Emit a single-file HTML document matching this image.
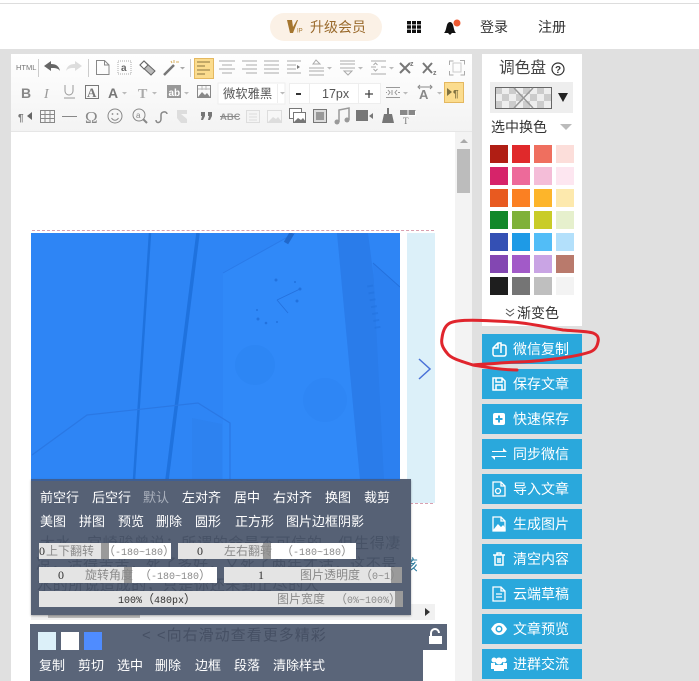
<!DOCTYPE html>
<html><head><meta charset="utf-8"><style>
html,body{margin:0;padding:0}
body{width:699px;height:681px;overflow:hidden;position:relative;background:#e0e0e0;font-family:"Liberation Sans","Noto Sans CJK SC",sans-serif}
.a{position:absolute}
.t{position:absolute;white-space:nowrap;line-height:18px}
.w{color:#fff;font-size:13px}
.b{position:absolute;left:482px;width:100px;height:30px;background:#2aa8dc}
.b span{position:absolute;left:31px;top:6px;color:#fff;font-size:14px;line-height:18px;white-space:nowrap}
.b svg{position:absolute;left:8px;top:5px}
.f{position:absolute;height:16px;font:12px/16px "Liberation Serif","Noto Sans CJK SC",serif;color:#333;white-space:nowrap;overflow:hidden}
.f i{position:absolute;top:0;height:16px;font-style:normal}
.f span{font:10px/16px "Liberation Mono",monospace}
.g{color:#8a8a8a}
</style></head><body>
<div class="a" style="left:0;top:0;width:699px;height:49px;background:#fff"></div>
<div class="a" style="left:0;top:3px;width:699px;height:1px;background:#ddd"></div>
<div class="a" style="left:270px;top:13px;width:112px;height:28px;border-radius:14px;background:#fbf1e6"></div>
<svg class="a" style="left:287px;top:19px" width="17" height="15" viewBox="0 0 17 15"><path d="M0 1h5l1 7 4-7h1L6 14H3z" fill="#a5762f"/><text x="10" y="13.500" font-size="6" fill="#a5762f" font-family="Liberation Sans">IP</text></svg>
<div class="t" style="left:310px;top:18px;font-size:14px;color:#9a6a2c">升级会员</div>
<svg class="a" style="left:407px;top:21px" width="14" height="12" fill="#111"><rect width="4" height="3.400"/><rect x="5" width="4" height="3.400"/><rect x="10" width="4" height="3.400"/><rect y="4.300" width="4" height="3.400"/><rect x="5" y="4.300" width="4" height="3.400"/><rect x="10" y="4.300" width="4" height="3.400"/><rect y="8.600" width="4" height="3.400"/><rect x="5" y="8.600" width="4" height="3.400"/><rect x="10" y="8.600" width="4" height="3.400"/></svg>
<svg class="a" style="left:443px;top:18px" width="20" height="17"><path d="M1 15c2-2 2-5 3-8 .5-2 2-3 3-3s2.500 1 3 3c1 3 1 6 3 8z" fill="#111"/><path d="M5 15h4l-2 2z" fill="#111"/><circle cx="14" cy="5" r="3.500" fill="#ef5a32"/></svg>
<div class="t" style="left:480px;top:18px;font-size:14px;color:#333">登录</div>
<div class="t" style="left:538px;top:18px;font-size:14px;color:#333">注册</div>

<div class="a" style="left:11px;top:54px;width:461px;height:627px;background:#fff"></div>
<div class="a" style="left:11px;top:54px;width:461px;height:78px;background:linear-gradient(#fff,#f3f3f3)"></div>
<div class="a" style="left:11px;top:131px;width:461px;height:1px;background:#e6e6e6"></div>
<div class="a" style="left:455px;top:132px;width:17px;height:549px;background:#f3f3f3"></div>
<div class="a" style="left:457px;top:149px;width:13px;height:44px;background:#bcbcbc"></div>
<svg class="a" style="left:458px;top:138px" width="12" height="6"><path d="M2 5l4-4 4 4z" fill="#aaa"/></svg>

<svg class="a" style="left:0;top:0" width="480" height="132" font-family="Liberation Sans">
<g fill="none" stroke="#999" stroke-width="1">
<text x="16" y="70" font-size="7.500" fill="#777" stroke="none">HTML</text>
<path d="M38.500 59v18M88.500 59v18M190.500 59v18" stroke="#ccc"/>
<path d="M44 66l7-5v3c5 0 8 2 9 7-2-3-5-3-9-3v3z" fill="#666" stroke="none"/>
<path d="M82 66l-7-5v3c-5 0-8 2-9 7 2-3 5-3 9-3v3z" fill="#ddd" stroke="none"/>
<path d="M96.500 60.500h8l4.500 4.500v9.500H96.500zM104.500 60.500v4.500h4.500" stroke="#888"/>
<rect x="118" y="61" width="13" height="13" stroke="#aaa" stroke-dasharray="1 1"/><text x="121" y="71" font-size="10" fill="#666" stroke="none" font-weight="bold">a</text>
<path d="M140 65l4-4 11 10-4 4z" fill="#bbb" stroke="#666"/><path d="M140 65l4-4 4 4-4 4z" fill="#fff" stroke="#666"/>
<path d="M164 75l10-10" stroke="#777" stroke-width="2.500"/><path d="M174 60v3M176 62h3M171 61l1 2" stroke="#d8b060"/>
<path d="M180 67l2.500 2.500 2.500-2.500" fill="#aaa" stroke="none"/>
<rect x="194.500" y="58.500" width="19" height="20" fill="#fbdc8e" stroke="#e4b860"/>
<path d="M197 62h13M197 66h8M197 70h13M197 74h8" stroke="#8a7440"/>
<path d="M219 61h16M222 65h10M219 69h16M222 73h10M242 61h15M246 65h11M242 69h15M246 73h11M264 61h15M264 65h15M264 69h15M264 73h15M287 61h14M287 65h9M287 69h9M287 73h14" stroke="#aaa"/>
<path d="M297 65l3 2-3 2z" fill="#777" stroke="none"/>
<path d="M309 68h15M309 71h15M309 75h15M316 60l-3 4h7z" stroke="#aaa"/>
<path d="M340 61h15M340 64h15M340 68h15M344 71h8l-4 4z" stroke="#aaa"/>
<path d="M371 61h15M371 74h15M371 67h5M381 67h5M373.500 65l2-2 2 2M373.500 69l2 2 2-2" stroke="#aaa"/>
<path d="M327 67l2.500 2.500 2.500-2.500M358 67l2.500 2.500 2.500-2.500M389 67l2.500 2.500 2.500-2.500" fill="#bbb" stroke="none"/>
<path d="M400 63l10 10M410 63l-10 10M423 63l9 10M432 63l-9 10" stroke="#777" stroke-width="2"/>
<text x="410" y="66" font-size="7" font-weight="bold" fill="#777" stroke="none">z</text><text x="433" y="75" font-size="7" font-weight="bold" fill="#777" stroke="none">z</text>
<path d="M449.500 65v-4h4M460 60.500h4.500v4M464.500 71v4h-4M453.500 75h-4v-4" stroke="#aaa"/><rect x="453" y="63" width="8" height="9" stroke="#ccc"/>
</g>
<text x="21" y="98" font-size="14" font-weight="bold" fill="#888">B</text>
<text x="44" y="98" font-size="14" font-style="italic" fill="#999" font-family="Liberation Serif">I</text>
<path d="M65 85v6a4 4 0 0 0 8 0v-6M64 98h11" fill="none" stroke="#999"/>
<rect x="85.500" y="85.500" width="13" height="13" fill="none" stroke="#777"/><text x="87" y="97" font-size="13" font-weight="bold" fill="#777" font-family="Liberation Serif">A</text>
<text x="108" y="98" font-size="14" font-weight="bold" fill="#777">A</text><path d="M122 92l2.500 2.500 2.500-2.500M152 92l2.500 2.500 2.500-2.500M184 92l2.500 2.500 2.500-2.500" fill="#bbb"/>
<text x="138" y="98" font-size="14" font-weight="bold" fill="#aaa" font-family="Liberation Serif">T</text>
<rect x="167" y="85" width="14" height="13" fill="#999"/><text x="168.500" y="96" font-size="10" font-weight="bold" fill="#fff">ab</text>
<rect x="197.500" y="85.500" width="13" height="12" fill="none" stroke="#888"/><path d="M198 97l4-5 3 3 2-2 3 4z" fill="#888"/><path d="M198 89h12M202 86v4M206 86v4" stroke="#bbb"/>
<rect x="218" y="83" width="67" height="21" fill="#fff" stroke="#eee"/>
<text x="223" y="98" font-size="12.300" fill="#555" font-family="Noto Sans CJK SC">微软雅黑</text><path d="M280 92l2.500 2.500 2.500-2.500" fill="#bbb"/><path d="M277.500 84v19" stroke="#eee"/>
<rect x="289.500" y="83.500" width="91" height="20" fill="#fff" stroke="#eee"/><path d="M309.500 84v19M358.500 84v19" stroke="#eee"/>
<path d="M296 94h5" stroke="#333" stroke-width="2"/>
<text x="322" y="98" font-size="12.500" fill="#555">17px</text>
<path d="M365 94h8M369 90v8" stroke="#444" stroke-width="1.300"/>
<g fill="none" stroke="#999"><path d="M386 87.500h14M386 97.500h14M386 92.500h1M398 92.500h2M392 90v5"/><path d="M388 90l2 2.500-2 2.500M397 90l-2 2.500 2 2.500"/><path d="M419 87h12M420 85l-2 2 2 2M430 85l2 2-2 2" stroke="#888"/></g>
<path d="M403 92l2.500 2.500 2.500-2.500M437 92l2.500 2.500 2.500-2.500" fill="#bbb"/>
<text x="419" y="99" font-size="13" font-weight="bold" fill="#888">A</text>
<rect x="444.500" y="82.500" width="19" height="20" fill="#fbdc8e" stroke="#e4b860"/><path d="M447 88l5 4-5 4z" fill="#7f7140"/><text x="453" y="97" font-size="10" fill="#7f7140" font-weight="bold">¶</text>
<text x="18" y="121" font-size="10" fill="#777" font-weight="bold">¶</text><path d="M27 116l5-4v8z" fill="#666"/>
<g fill="none" stroke="#888"><rect x="40.500" y="110.500" width="14" height="12"/><path d="M40 114.500h15M40 118.500h15M45 111v12M50 111v12"/><path d="M62 116.500h15"/></g>
<text x="85" y="123" font-size="17" fill="#888" font-family="Liberation Serif">Ω</text>
<g fill="none" stroke="#888"><circle cx="115" cy="116" r="7"/><path d="M111.500 118c2 3 5 3 7 0"/><circle cx="139" cy="115" r="6"/><path d="M143 119l4 4" stroke-width="2"/><path d="M156 120c0 4 5 3 5-1v-4c0-4 6-4 6-1" stroke-width="1.500"/></g>
<circle cx="112.500" cy="114" r=".9" fill="#888"/><circle cx="117.500" cy="114" r=".9" fill="#888"/>
<text x="136" y="118" font-size="8" fill="#888">a</text>
<path d="M177 110h10v4h-6l6 5v4h-6l-4-5z" fill="#ddd"/>
<path d="M201 112h4v4l-2 4h-2l1-4h-1zM208 112h4v4l-2 4h-2l1-4h-1z" fill="#777"/>
<text x="220" y="120" font-size="9.500" font-weight="bold" fill="#999">ABC</text><path d="M220 116.500h19" stroke="#888"/>
<rect x="246.500" y="110.500" width="13" height="12" fill="#f4f4f4" stroke="#ddd"/><path d="M249 114h8M249 117h8M249 120h8" stroke="#ddd"/>
<rect x="267.500" y="110.500" width="14" height="12" fill="#f7f7f7" stroke="#ddd"/><path d="M268 122l5-5 3 2 2-2 4 5z" fill="#ddd"/>
<rect x="289.500" y="108.500" width="12" height="10" fill="#fff" stroke="#777"/><rect x="293.500" y="112.500" width="12" height="10" fill="#fff" stroke="#777"/><path d="M294 122l4-4 3 2 2-2 3 4z" fill="#777"/>
<rect x="313.500" y="109.500" width="13" height="13" fill="#ddd" stroke="#777"/><rect x="316" y="112" width="8" height="8" fill="#999"/>
<path d="M339 122v-12l10-2v12" fill="none" stroke="#999" stroke-width="1.500"/><circle cx="337" cy="122" r="2.500" fill="#999"/><circle cx="347" cy="120" r="2.500" fill="#999"/>
<rect x="356" y="110" width="12" height="11" fill="#777"/><path d="M369 116l4-3v6z" fill="#777"/>
<path d="M387 108h2v6h3l2 9h-12l2-9h3z" fill="#777"/>
<path d="M400 110h16v5h-16z" fill="#888"/><path d="M400.500 115.500h15v-5M408 110v5" stroke="#fff" fill="none"/><text x="403" y="124" font-size="9" fill="#777" font-family="Liberation Serif">T</text>
</svg>

<div class="a" style="left:32px;top:230px;width:402px;border-top:1px dashed #d9a0b0"></div>
<svg class="a" style="left:31px;top:233px" width="369" height="247" viewBox="31 233 369 247">
<rect x="31" y="233" width="369" height="247" fill="#2e85f5"/>
<path d="M223 273L295 233H337L360 480H223z" fill="#3089f8"/>
<path d="M337 233h31l32 247h-40z" fill="#2a7cea"/>
<path d="M373 263l27 24v193h-16z" fill="#2c80f0"/>
<path d="M192 418l30 6v56h-30z" fill="#2d82f0"/>
<g fill="none">
<path d="M150 233L134 480" stroke-width="2.500" stroke="#1f72de"/><path d="M198 233L167 480" stroke-width="3.500" stroke="#1f72de"/>
<path d="M223 273L295 233" stroke-width="1" stroke="#2a7ae8"/><path d="M32 455L87 415L198 403L230 423V480" stroke-width="1.200" stroke="#2a78e4"/>
<path d="M373 263L400 287" stroke-width="1" stroke="#2470dc"/><path d="M277 300L300 289M277 300L288 313" stroke-width=".8" stroke="#2470dc"/>
<path d="M292 233l-6 10" stroke-width="5" stroke="#2068cc"/>
</g>
<g fill="#2272de"><circle cx="276" cy="280" r="1.500"/><circle cx="295" cy="282" r="1"/><circle cx="300" cy="289" r="1.500"/><circle cx="297" cy="301" r="1.500"/><circle cx="257" cy="310" r="1"/><circle cx="258" cy="319" r="1.500"/><circle cx="266" cy="323" r="1.300"/><circle cx="277" cy="322" r="1"/></g>
<circle cx="255" cy="365" r="20" fill="#2c83f2" opacity=".6"/><circle cx="325" cy="400" r="22" fill="#2c83f2" opacity=".5"/>
<path d="M370 285l8 45" stroke="#2272de" stroke-width="6" stroke-dasharray="2 5" opacity=".5"/>
</svg>
<div class="a" style="left:407px;top:233px;width:28px;height:270px;background:#dcf0f9"></div>
<svg class="a" style="left:417px;top:357px" width="16" height="24"><path d="M2 2l11 10L2 22" fill="none" stroke="#4a72d8" stroke-width="1.500"/></svg>
<div class="a" style="left:31px;top:503px;width:402px;border-top:1px dashed #d9a0b0"></div>

<div class="a" style="left:31px;top:604px;width:404px;height:16px;background:#f1f1f1"></div>
<div class="a" style="left:48px;top:612px;width:92px;height:6px;background:#bcbcbc"></div>
<svg class="a" style="left:424px;top:607px" width="8" height="10"><path d="M1 1l5 4-5 4z" fill="#333"/></svg>
<div class="t" style="left:403px;top:557px;font-size:15px;color:#2d7da0">该</div>

<div class="a" style="left:31px;top:479px;width:380px;height:136px;background:#566175;box-shadow:0 1px 2px rgba(0,0,0,.3)"></div>
<div class="a" style="left:31px;top:479px;width:369px;height:2px;background:#3d5f96"></div>
<div class="t" style="left:40px;top:535px;font-size:15px;color:#475266;letter-spacing:.7px">大水，宫崎骏曾说：所谓的命是不可信的，但生得凄</div>
<div class="t" style="left:36px;top:556px;font-size:15px;color:#475266;letter-spacing:.7px">凉，活得苦苦，死了多好，又死了两年才活，这不是</div>
<div class="t" style="left:37px;top:577px;font-size:15px;color:#475266;letter-spacing:.7px">水的所说造成的，只是你还未到止尽的人</div>
<div class="t w" style="left:40px;top:489px">前空行</div>
<div class="t w" style="left:92px;top:489px">后空行</div>
<div class="t w" style="left:143px;top:489px;color:#a9b0bc">默认</div>
<div class="t w" style="left:182px;top:489px">左对齐</div>
<div class="t w" style="left:234px;top:489px">居中</div>
<div class="t w" style="left:273px;top:489px">右对齐</div>
<div class="t w" style="left:325px;top:489px">换图</div>
<div class="t w" style="left:364px;top:489px">裁剪</div>
<div class="t w" style="left:40px;top:513px">美图</div>
<div class="t w" style="left:79px;top:513px">拼图</div>
<div class="t w" style="left:118px;top:513px">预览</div>
<div class="t w" style="left:156px;top:513px">删除</div>
<div class="t w" style="left:195px;top:513px">圆形</div>
<div class="t w" style="left:235px;top:513px">正方形</div>
<div class="t w" style="left:286px;top:513px">图片边框阴影</div>

<div class="f" style="left:39px;top:543px;width:132px;background:#fff"><i style="left:0;width:62px;background:#e4e4e4"></i><i style="left:62px;width:8px;background:#9a9a9a"></i><i style="left:0">0</i><i class="g" style="left:7px">上下翻转</i><i class="g" style="left:64px">（<span>-180~180</span>）</i></div>
<div class="f" style="left:178px;top:543px;width:178px;background:#fff"><i style="left:0;width:85px;background:#e4e4e4"></i><i style="left:85px;width:8px;background:#9a9a9a"></i><i style="left:19px">0</i><i class="g" style="left:46px">左右翻转</i><i class="g" style="left:103px">（<span>-180~180</span>）</i></div>
<div class="f" style="left:39px;top:567px;width:178px;background:#fff"><i style="left:0;width:85px;background:#e4e4e4"></i><i style="left:85px;width:8px;background:#9a9a9a"></i><i style="left:19px">0</i><i class="g" style="left:46px">旋转角度</i><i class="g" style="left:100px">（<span>-180~180</span>）</i></div>
<div class="f" style="left:224px;top:567px;width:178px;background:#e4e4e4"><i style="left:167px;width:11px;background:#9a9a9a"></i><i style="left:34px">1</i><i class="g" style="left:76px">图片透明度（<span>0~1</span>）</i></div>
<div class="f" style="left:39px;top:591px;width:364px;background:#e4e4e4"><i style="left:356px;width:8px;background:#9a9a9a"></i><i style="left:79px"><span>100%</span>（<span>480px</span>）</i><i class="g" style="left:238px">图片宽度</i><i class="g" style="left:296px">（<span>0%~100%</span>）</i></div>

<div class="a" style="left:30px;top:624px;width:417px;height:26px;background:#5a6579"></div>
<div class="a" style="left:30px;top:650px;width:393px;height:31px;background:#5a6579"></div>
<div class="t" style="left:142px;top:627px;font-size:15px;color:#465064;letter-spacing:1px">&lt; &lt;向右滑动查看更多精彩</div>
<div class="a" style="left:38px;top:632px;width:18px;height:18px;background:#dcf0f9"></div>
<div class="a" style="left:61px;top:632px;width:18px;height:18px;background:#fff"></div>
<div class="a" style="left:84px;top:632px;width:18px;height:18px;background:#4f8cff"></div>
<svg class="a" style="left:428px;top:628px" width="15" height="17"><path d="M3 8V5a4 4 0 0 1 8 0" fill="none" stroke="#fff" stroke-width="2"/><rect x="1" y="8" width="13" height="8" fill="#fff"/></svg>
<div class="t w" style="left:39px;top:657px">复制</div>
<div class="t w" style="left:78px;top:657px">剪切</div>
<div class="t w" style="left:117px;top:657px">选中</div>
<div class="t w" style="left:155px;top:657px">删除</div>
<div class="t w" style="left:195px;top:657px">边框</div>
<div class="t w" style="left:234px;top:657px">段落</div>
<div class="t w" style="left:273px;top:657px">清除样式</div>

<div class="a" style="left:482px;top:54px;width:100px;height:272px;background:#fff"></div>
<div class="t" style="left:499px;top:60px;font-size:15.700px;color:#444;line-height:18px">调色盘</div>
<svg class="a" style="left:551px;top:62px" width="14" height="14"><circle cx="7" cy="7" r="6" fill="none" stroke="#333" stroke-width="1.200"/><text x="4" y="11" font-size="10" font-weight="bold" fill="#333" font-family="Liberation Sans">?</text></svg>
<div class="a" style="left:490px;top:82px;width:83px;height:31px;background:#eee"></div>
<svg class="a" style="left:495px;top:87px" width="58" height="22"><defs><pattern id="c" width="14" height="14" patternUnits="userSpaceOnUse"><rect width="14" height="14" fill="#eee"/><rect width="7" height="7" fill="#ccc"/><rect x="7" y="7" width="7" height="7" fill="#ccc"/></pattern></defs><rect x=".5" y=".5" width="56" height="21" fill="url(#c)" stroke="#666"/><path d="M19 1l19 20M38 1L19 21" stroke="#999" stroke-width="1.500"/></svg>
<svg class="a" style="left:558px;top:93px" width="10" height="9"><path d="M0 0h10L5 9z" fill="#222"/></svg>
<div class="t" style="left:491px;top:118px;font-size:14px;color:#333">选中换色</div>
<svg class="a" style="left:560px;top:124px" width="12" height="7"><path d="M0 0h12L6 6z" fill="#bbb"/></svg>
<svg class="a" style="left:490px;top:145px" width="84" height="150">
<rect width="18" height="18" x="0" y="0" fill="#b01e14"/><rect width="18" height="18" x="22" y="0" fill="#e0292b"/><rect width="18" height="18" x="44" y="0" fill="#ef6f5f"/><rect width="18" height="18" x="66" y="0" fill="#fcdeda"/>
<rect width="18" height="18" x="0" y="22" fill="#d6246a"/><rect width="18" height="18" x="22" y="22" fill="#ed6a9a"/><rect width="18" height="18" x="44" y="22" fill="#f4bdd8"/><rect width="18" height="18" x="66" y="22" fill="#fde6f0"/>
<rect width="18" height="18" x="0" y="44" fill="#e85a20"/><rect width="18" height="18" x="22" y="44" fill="#fb8022"/><rect width="18" height="18" x="44" y="44" fill="#fdb52a"/><rect width="18" height="18" x="66" y="44" fill="#fde9ad"/>
<rect width="18" height="18" x="0" y="66" fill="#12882a"/><rect width="18" height="18" x="22" y="66" fill="#7fb13a"/><rect width="18" height="18" x="44" y="66" fill="#c9cc28"/><rect width="18" height="18" x="66" y="66" fill="#e6f0cd"/>
<rect width="18" height="18" x="0" y="88" fill="#3450b4"/><rect width="18" height="18" x="22" y="88" fill="#1e9ae6"/><rect width="18" height="18" x="44" y="88" fill="#52bdf7"/><rect width="18" height="18" x="66" y="88" fill="#b3e0fb"/>
<rect width="18" height="18" x="0" y="110" fill="#8347b2"/><rect width="18" height="18" x="22" y="110" fill="#a25ac8"/><rect width="18" height="18" x="44" y="110" fill="#c9a4e4"/><rect width="18" height="18" x="66" y="110" fill="#b97a6c"/>
<rect width="18" height="18" x="0" y="132" fill="#1e1e1e"/><rect width="18" height="18" x="22" y="132" fill="#757575"/><rect width="18" height="18" x="44" y="132" fill="#bfbfbf"/><rect width="18" height="18" x="66" y="132" fill="#f3f3f3"/>
</svg>
<svg class="a" style="left:505px;top:308px" width="10" height="10"><path d="M1 1l4 3 4-3M1 5l4 3 4-3" fill="none" stroke="#555"/></svg>
<div class="t" style="left:517px;top:304px;font-size:14px;color:#333">渐变色</div>

<div class="b" style="top:334px"><svg width="18" height="20" fill="none" stroke="#fff" stroke-width="1.500"><path d="M3 9l5-5h3v2h3a2 2 0 0 1 2 2v7a2 2 0 0 1-2 2H5a2 2 0 0 1-2-2zM8 4v5H3M11 6v8"/></svg><span>微信复制</span></div>
<div class="b" style="top:369px"><svg width="18" height="20" fill="none" stroke="#fff" stroke-width="1.500"><path d="M3 4h9l3 3v9H3zM6 4v4h6V4M6 16v-5h6v5"/></svg><span>保存文章</span></div>
<div class="b" style="top:404px"><svg width="18" height="20"><rect x="3" y="4" width="12" height="12" rx="2" fill="#fff"/><path d="M9 6.500v7M5.500 10h7" stroke="#2aa8dc" stroke-width="2"/></svg><span>快速保存</span></div>
<div class="b" style="top:439px"><svg width="18" height="20" fill="#fff"><path d="M2 7h11V4l4 4H2zM16 13H5v3l-4-4h15z"/></svg><span>同步微信</span></div>
<div class="b" style="top:474px"><svg width="18" height="20" fill="none" stroke="#fff" stroke-width="1.300"><path d="M3 3h8l4 4v10H3zM11 3v4h4"/><circle cx="8" cy="12" r="2.500"/></svg><span>导入文章</span></div>
<div class="b" style="top:509px"><svg width="18" height="20" fill="none" stroke="#fff" stroke-width="1.300"><path d="M3 3h8l4 4v10H3zM11 3v4h4"/><path d="M4 16l4-5 3 3 2-2 2 3v1z" fill="#fff"/></svg><span>生成图片</span></div>
<div class="b" style="top:544px"><svg width="18" height="20" fill="none" stroke="#fff" stroke-width="1.500"><path d="M3 6h12M5 6v10h8V6M7 6V4h4v2M8 9v5M10 9v5"/></svg><span>清空内容</span></div>
<div class="b" style="top:579px"><svg width="18" height="20" fill="none" stroke="#fff" stroke-width="1.300"><path d="M3 3h8l4 4v10H3zM11 3v4h4M6 10h6M6 13h6"/></svg><span>云端草稿</span></div>
<div class="b" style="top:614px"><svg width="18" height="20"><path d="M1 10c3-5 5-6 8-6s5 1 8 6c-3 5-5 6-8 6s-5-1-8-6z" fill="#fff"/><circle cx="9" cy="10" r="3.500" fill="#2aa8dc"/><circle cx="9" cy="10" r="2" fill="#fff"/></svg><span>文章预览</span></div>
<div class="b" style="top:649px"><svg width="18" height="20" fill="#fff"><circle cx="4" cy="6" r="2.500"/><circle cx="14" cy="6" r="2.500"/><circle cx="9" cy="7" r="3.500"/><path d="M1 9h4v6H1zM13 9h4v6h-4zM4 11h10v6H4z"/></svg><span>进群交流</span></div>

<svg class="a" style="left:0;top:0" width="699" height="681"><path d="M517 370C500 370 485 367 473 365C460 361 450 358 447 353C442 347 441 343 442 338C443 330 446 325 450 323C458 319 480 320 513 322C535 324 550 328 563 330C575 331 587 331 593 333C598 335 599 338 598 342C597 347 595 350 590 352C578 356 565 358 545 360C530 362 513 362 500 363C490 364 480 364 473 365" fill="none" stroke="#e0252d" stroke-width="3" stroke-linecap="round"/></svg>
</body></html>
